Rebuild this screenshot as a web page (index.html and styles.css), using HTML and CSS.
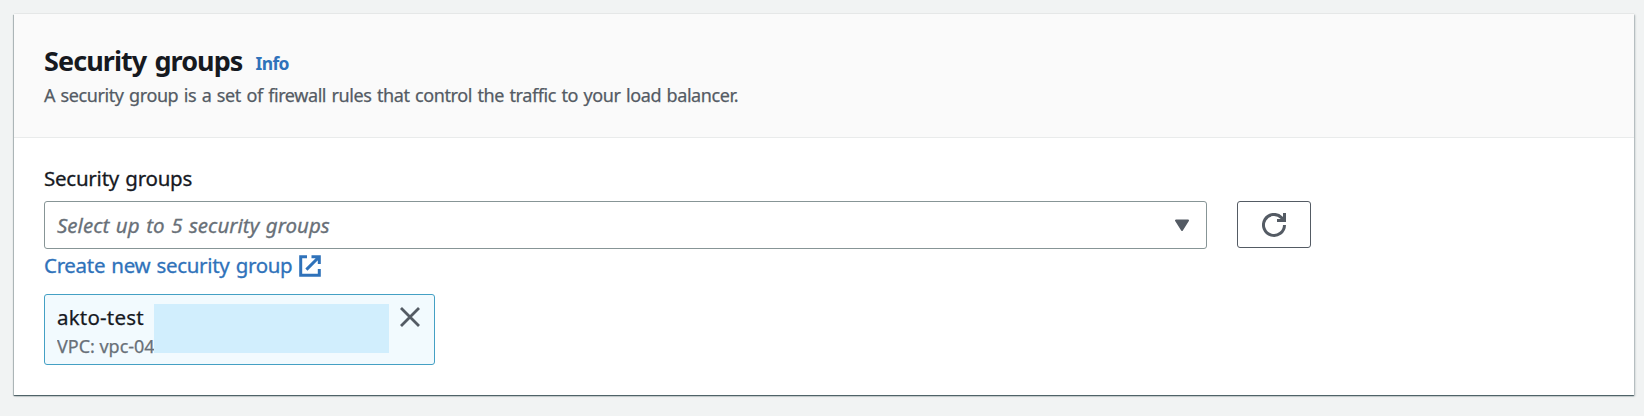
FILE: index.html
```html
<!DOCTYPE html>
<html lang="en">
<head>
<meta charset="utf-8">
<title>Security groups</title>
<link rel="stylesheet" href="styles.css">
</head>
<body>
<section class="card">
  <header class="card-header">
    <div class="heading"><h2 class="title">Security groups</h2><a class="info">Info</a></div>
    <p class="description"><span>A security group is a set of firewall rules that control the traffic to your load balancer.</span></p>
  </header>
  <div class="card-body">
    <div class="label"><span>Security groups</span></div>
    <div class="controls">
      <div class="select"><span class="placeholder">Select up to 5 security groups</span>
        <svg class="caret" width="16" height="13" viewBox="0 0 16 13"><path d="M2 1.5H14L8 11Z" fill="#545b64" stroke="#545b64" stroke-width="2" stroke-linejoin="round"/></svg>
      </div>
      <button class="refresh" aria-label="Refresh">
        <svg width="24" height="24" viewBox="0 0 24 24" fill="none" stroke="#545b64" stroke-width="3"><path d="M22.5 12A10.5 10.5 0 1 1 19.5 4.6L22 7"/><path d="M22.5 0V7.5H15"/></svg>
      </button>
    </div>
    <a class="create"><span class="create-text">Create new security group</span>
      <svg width="22" height="22" viewBox="0 0 22 22" fill="none" stroke="#2f72ba" stroke-width="3"><path d="M8 1.7H1.7V20.3H20.3V14"/><path d="M12.5 1.7H20.3V9M20 2L7.4 14.6"/></svg>
    </a>
    <div class="token">
      <div class="token-text">
        <div class="token-name"><span>akto-test</span></div>
        <div class="token-vpc"><span>VPC: vpc-04</span></div>
      </div>
      <div class="mask"></div>
      <svg class="close" width="20" height="20" viewBox="0 0 20 20" fill="none" stroke="#545b64" stroke-width="2.8"><path d="M1 1L19 19M19 1L1 19"/></svg>
    </div>
  </div>
</section>
</body>
</html>
```
FILE: styles.css
```css
* { box-sizing: border-box; }
body {
  margin: 0;
  padding: 14px 10px 21px 14px;
  background: #f1f3f3;
  font-family: "Noto Sans", "Open Sans", sans-serif;
  color: #16191f;
}
.card {
  height: 381px;
  background: #fff;
  box-shadow: 0 1px 1px 0 rgba(0, 28, 36, .5), 1px 1px 2px 0 rgba(0, 28, 36, .25), -1px 1px 1px 0 rgba(0, 28, 36, .2), 0 -1px 0 0 #e9ebeb;
}
.card-header {
  height: 124px;
  padding: 28px 30px 0;
  background: #fafafa;
  border-bottom: 1px solid #e9ebeb;
}
.heading { display: flex; align-items: baseline; gap: 13px; height: 37px; line-height: 37px; }
.title { margin: 0; font-size: 27px; font-weight: 700; letter-spacing: -.93px; word-spacing: 2px; }
.info { font-size: 17.5px; line-height: 20px; font-weight: 700; color: #2f72ba; letter-spacing: -.6px; transform: translateY(-1px); }
.description { margin: 2px 0 0; font-size: 18px; line-height: 28px; color: #545b64; letter-spacing: -.41px; word-spacing: 1.22px; white-space: nowrap; -webkit-text-stroke: .25px; }
.card-body { padding: 25px 30px 0; }
.label { height: 30px; font-size: 20.5px; line-height: 30px; letter-spacing: -.24px; word-spacing: 1.2px; -webkit-text-stroke: .3px; }
.controls { display: flex; gap: 30px; margin-top: 8px; }
.select {
  display: flex;
  align-items: center;
  justify-content: space-between;
  width: 1163px;
  height: 48px;
  padding: 0 16px 0 12px;
  border: 1px solid #879596;
  border-radius: 3px;
}
.placeholder { font-size: 20.5px; font-style: italic; color: #687078; letter-spacing: .02px; word-spacing: 1.2px; -webkit-text-stroke: .3px; }
.refresh {
  display: flex;
  align-items: center;
  justify-content: center;
  width: 74px;
  height: 47px;
  padding: 0;
  background: #fff;
  border: 1px solid #545b64;
  border-radius: 3px;
}
.create { display: flex; align-items: center; gap: 7px; height: 34px; font-size: 20.5px; color: #2f72ba; letter-spacing: -.32px; word-spacing: 1.2px; -webkit-text-stroke: .3px; }
.create-text { margin-top: -2px; }
.token {
  display: flex;
  align-items: flex-start;
  width: 391px;
  height: 71px;
  margin-top: 11px;
  padding-left: 12px;
  border: 1px solid #44a0c4;
  border-radius: 3px;
  background: #f2fafe;
}
.token-text { width: 96.5px; padding-top: 8px; overflow: hidden; white-space: nowrap; -webkit-text-stroke: .25px; }
.token-name { height: 29px; font-size: 20.5px; line-height: 28px; letter-spacing: .2px; }
.token-vpc { height: 28px; font-size: 18px; line-height: 28px; color: #687078; letter-spacing: -.02px; }
.mask { width: 235px; height: 49px; margin-top: 9px; background: #d1eefd; }
.close { margin: 12px 0 0 11px; }
```
